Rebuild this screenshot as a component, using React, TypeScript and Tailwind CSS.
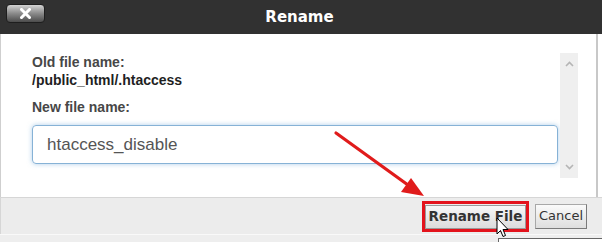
export default function App() {
  return (
    <div className="relative w-[602px] h-[242px] overflow-hidden bg-white font-['Liberation_Sans',Arial,sans-serif]">
      {/* Title bar */}
      <div className="grid grid-cols-[1fr_auto_1fr] h-[34px] bg-[#313131]">
        <div className="flex items-start pl-[6px] pt-[4px]">
          <button className="flex items-center justify-center w-[39px] h-[19px] rounded-[4px] border border-[#1e1e1e] bg-gradient-to-b from-[#d4d4d4] via-[#8a8a8a] to-[#4c4c4c]">
            <svg width="11" height="11" viewBox="0 0 11 11">
              <path d="M1.5 1.5 L9.5 9.5 M9.5 1.5 L1.5 9.5" stroke="#fff" strokeWidth="3" strokeLinecap="square" />
            </svg>
          </button>
        </div>
        <div className="flex items-center text-[15px] font-bold text-white -ml-[3px] font-['DejaVu_Sans',Verdana,sans-serif]">Rename</div>
        <div />
      </div>

      {/* Body */}
      <div className="flex h-[163px] border-l border-[#cfcfcf]">
        <div className="flex-1 pl-[31px] pt-[19px]">
          <div className="text-[14px] leading-[18px] font-bold text-[#474747]">Old file name:</div>
          <div className="text-[14px] leading-[18px] font-bold text-[#1f1f1f]">/public_html/.htaccess</div>
          <div className="mt-[9px] text-[14px] leading-[18px] font-bold text-[#474747]">New file name:</div>
          <div className="mt-[9px] flex items-center w-[526px] h-[39px] rounded-[4px] border border-[#86b2d6] shadow-[0_0_5px_rgba(110,165,215,0.55)] pl-[14px] text-[17px] text-[#555]">
            htaccess_disable
          </div>
        </div>
        <div className="mt-[19px] flex flex-col items-center justify-between w-[18px] h-[125px] bg-[#efefef] py-[8px]">
          <svg width="9" height="6" viewBox="0 0 9 6">
            <path d="M1 5 L4.5 1.5 L8 5" fill="none" stroke="#b5b5b5" strokeWidth="1.6" />
          </svg>
          <svg width="9" height="6" viewBox="0 0 9 6">
            <path d="M1 1 L4.5 4.5 L8 1" fill="none" stroke="#b5b5b5" strokeWidth="1.6" />
          </svg>
        </div>
        <div className="w-[18px]" />
        <div className="w-[2px] bg-[#c8c8c8]" />
        <div className="w-[4px]" />
      </div>

      {/* Footer */}
      <div className="flex items-center justify-end gap-[6px] h-[37px] pr-[15px] border-t border-l border-[#d6d6d6] bg-[#ececec] font-['DejaVu_Sans',Verdana,sans-serif]">
        <div className="border-[3px] border-[#e3131c] mt-[1px]">
          <button className="h-[24px] w-[101px] border border-[#9a9a9a] bg-gradient-to-b from-[#f7f7f7] to-[#dcdcdc] text-[13.5px] font-bold text-[#333]">
            Rename File
          </button>
        </div>
        <button className="h-[25px] w-[52px] border border-[#a8a8a8] border-r-[#7a7a7a] border-b-[#7a7a7a] bg-gradient-to-b from-[#fafafa] to-[#dedede] text-[13px] text-[#333]">
          Cancel
        </button>
      </div>
      <div className="h-[8px] border-t border-[#f9f9f9] bg-[#eeeeee]" />

      {/* Tooltip edge under cursor */}
      <div className="absolute left-[498px] top-[238px] w-[104px] h-[6px] border-t border-l border-[#666] bg-white" />

      {/* Red arrow annotation */}
      <svg className="absolute left-0 top-0 pointer-events-none" width="602" height="242" viewBox="0 0 602 242">
        <line x1="336" y1="133" x2="408" y2="185" stroke="#e01b1b" strokeWidth="3.2" strokeLinecap="round" />
        <polygon points="424,196 401,192 411,178" fill="#e01b1b" />
      </svg>

      {/* Mouse cursor */}
      <svg className="absolute left-[496px] top-[217px]" width="13" height="22" viewBox="0 0 13 22">
        <path d="M1 1 L1 17 L4.5 13.5 L7 19.5 L9.5 18.5 L7 12.5 L12 12.5 Z" fill="#fff" stroke="#000" strokeWidth="1" strokeLinejoin="round" />
      </svg>
    </div>
  );
}
